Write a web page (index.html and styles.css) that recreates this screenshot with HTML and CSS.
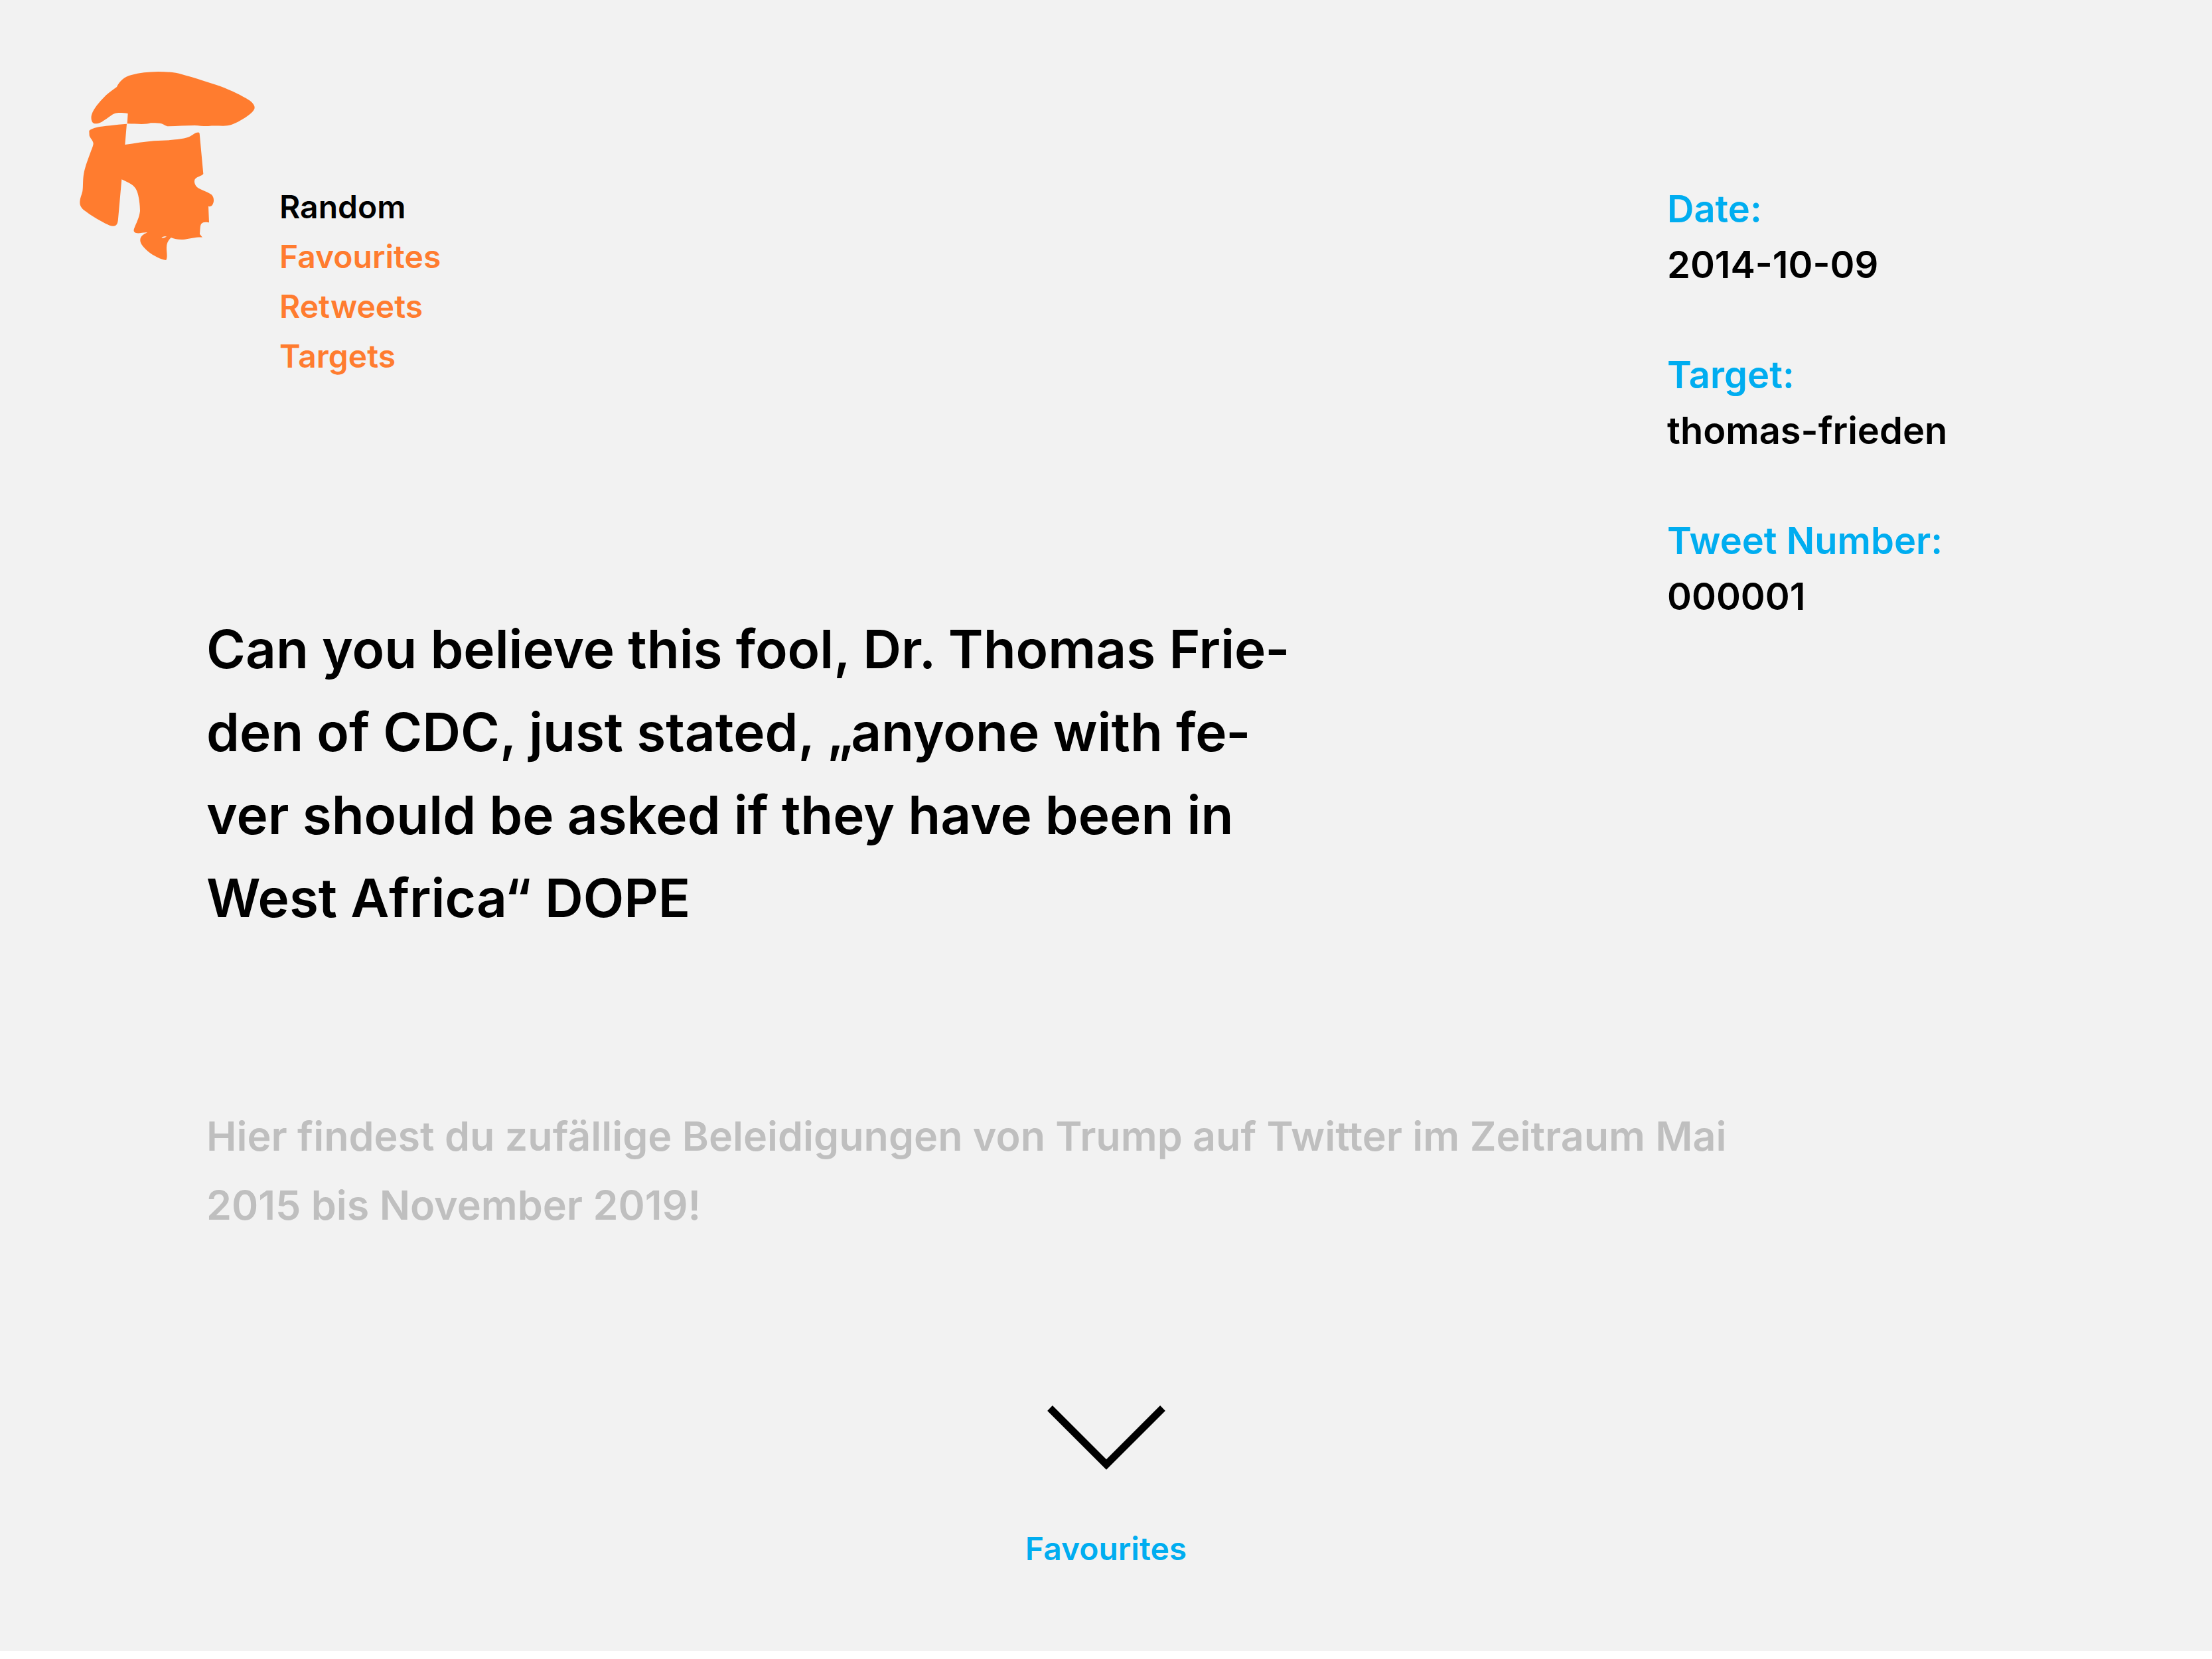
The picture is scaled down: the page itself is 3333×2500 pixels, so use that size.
FILE: index.html
```html
<!DOCTYPE html>
<html lang="de">
<head>
<meta charset="utf-8">
<meta name="viewport" content="width=device-width, initial-scale=1">
<title>Random</title>
<link rel="stylesheet" href="styles.css">
</head>
<body>
<main class="page">
  <div class="top">
    <div class="lead">
      <header class="header">
        <a class="logo" href="#" aria-label="Home">
          <svg class="logo-image" viewBox="60 54 792 852" aria-hidden="true">
            <path d="M228 123C240 96 264 76 294 69C330 59 370 55 415 54C456 54 495 58 522 66C560 76 620 95 676 113C730 131 780 155 812 174C835 187 851 202 851 216C851 231 830 248 806 263C779 280 750 295 728 298C705 301 672 296 642 300C620 301 603 298 580 297C540 297 500 300 461 301C447 300 437 288 421 287C407 286 394 286 381 286C366 293 330 291 275 289L278 243C255 240 233 239 219 243C205 247 180 270 160 281C149 287 133 291 125 288C115 284 111 269 113 254C117 232 139 202 164 176C185 153 208 138 228 123Z"/>
            <path d="M273 290L265 384C310 378 350 371 396 367C430 363 460 366 492 361C520 358 545 354 563 344C577 337 585 327 599 329L602 333L619 516C612 526 588 529 581 541C577 550 579 560 585 569C597 588 635 593 656 610C665 618 669 635 664 648C660 661 653 665 642 663L645 736C631 733 616 734 610 742C604 750 605 768 603 788L615 803C590 801 558 809 536 812C512 815 491 811 473 804C460 817 453 831 453 849C452 868 459 890 451 906C427 904 394 887 367 865C350 850 334 832 334 817C333 799 346 791 366 781C348 779 330 787 315 783C305 780 303 774 306 764C315 741 330 713 333 684C333 657 328 616 319 594C308 564 280 556 250 541L234 720C232 743 227 751 212 752C202 752 190 747 176 740C144 724 109 703 82 682C68 671 60 659 61 642C62 624 69 612 73 594C76 577 74 548 78 520C84 481 100 446 112 411C117 398 122 388 122 378C120 365 107 354 104 343L103 321C111 313 123 309 140 305C165 300 224 294 273 290ZM430 806C437 808 448 804 453 799C444 798 435 799 430 806Z" fill-rule="evenodd"/>
          </svg>
        </a>
        <nav class="nav" aria-label="Main">
          <a class="nav-link is-active" href="#random" aria-current="page">Random</a>
          <a class="nav-link" href="#favourites">Favourites</a>
          <a class="nav-link" href="#retweets">Retweets</a>
          <a class="nav-link" href="#targets">Targets</a>
        </nav>
      </header>
      <h1 class="tweet" lang="en">Can you believe this fool, Dr. Thomas Frie&shy;den of CDC, just stated, „anyone with fe&shy;ver should be asked if they have been in West Africa“ DOPE</h1>
    </div>
    <dl class="info">
      <div class="info-item"><dt>Date:</dt><dd>2014-10-09</dd></div>
      <div class="info-item"><dt>Target:</dt><dd>thomas-frieden</dd></div>
      <div class="info-item"><dt>Tweet Number:</dt><dd>000001</dd></div>
    </dl>
  </div>
  <p class="intro">Hier findest du zufällige Beleidigungen von Trump auf Twitter im Zeitraum Mai 2015 bis November 2019!</p>
  <a class="next" href="#favourites">
    <svg class="next-arrow" viewBox="0 0 178 97" aria-hidden="true"><path d="M4 4L89 89L174 4"/></svg>
    <span>Favourites</span>
  </a>
</main>
</body>
</html>
```
FILE: styles.css
```css
body {
  margin: 0;
  background: #fff;
  color: #000;
  font-family: Inter, "Liberation Sans", sans-serif;
  font-weight: 600;
}

a {
  color: inherit;
  text-decoration: none;
}

.page {
  padding-bottom: 117px;
  background: #f2f2f2;
}

.top {
  display: grid;
  grid-template-columns: 1fr 821px;
}

.header {
  display: flex;
  gap: 37px;
  padding: 108px 0 0 120px;
}

.logo-image {
  display: block;
  width: 264px;
  height: 284px;
  fill: #ff7c2f;
}

.nav {
  display: flex;
  flex-direction: column;
  padding-top: 166px;
  color: #ff7c2f;
  font-size: 48px;
  line-height: 75px;
}

.nav-link.is-active {
  color: #000;
}

.tweet {
  max-width: 1644px;
  margin: 341px 0 0 311px;
  font-size: 80px;
  font-weight: 600;
  line-height: 125px;
}

.info {
  display: flex;
  flex-direction: column;
  gap: 82px;
  margin: 273px 0 0;
  font-size: 56px;
  line-height: 84px;
}

.info dt {
  color: #00adf0;
}

.info dd {
  margin: 0;
}

.intro {
  max-width: 2333px;
  margin: 245px 0 0 311px;
  color: #bfbfbf;
  font-size: 61px;
  line-height: 104px;
}

.next {
  display: flex;
  flex-direction: column;
  align-items: center;
  gap: 81px;
  width: max-content;
  margin: 250px auto 0;
  color: #00adf0;
  font-size: 48px;
  line-height: 75px;
}

.next-arrow {
  width: 178px;
  height: 97px;
  fill: none;
  stroke: #000;
  stroke-width: 11;
}
```
